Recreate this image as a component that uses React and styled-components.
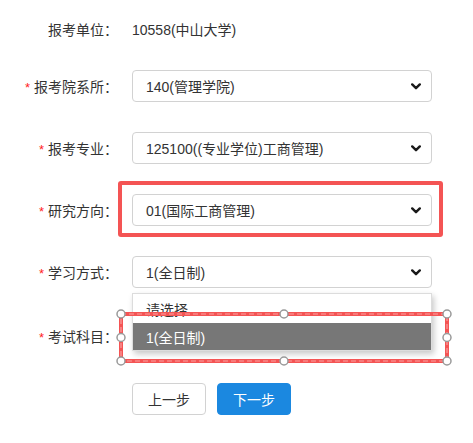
import React from "react";
import styled, { createGlobalStyle } from "styled-components";

const Global = createGlobalStyle`
  html, body { margin: 0; padding: 0; background: #fff; }
  body { font-family: "Liberation Sans", "Noto Sans CJK SC", sans-serif; font-size: 14px; color: #333; }
`;

const Form = styled.div`
  width: 473px; height: 443px; box-sizing: border-box; padding-top: 13px;
  display: flex; flex-direction: column; gap: 30px;
`;

const Row = styled.div`
  display: flex; align-items: center; height: 32px;
  margin-top: ${({ $mt }) => $mt || 0}px;
`;

const Label = styled.div`
  width: 118px; margin-right: 14px; text-align: right; white-space: nowrap;
  color: #333; font-size: 14px;
  .req { color: #f22; margin-right: 4px; font-size: 13px; }
`;

const Value = styled.div`
  color: #333; font-size: 14px;
`;

const Field = styled.div`
  position: relative; width: 300px; height: 32px;
`;

const SelectBox = styled.div`
  box-sizing: border-box; width: 300px; height: 32px; border: 1px solid #d2d2d2; border-radius: 4px;
  display: flex; align-items: center; justify-content: space-between; padding: 0 10px 0 13px;
  color: #333; background: #fff;
  svg { display: block; }
`;

const RedFrame = styled.div`
  position: absolute; top: -13px; left: -14px; right: -11px; bottom: -11px;
  border: 4px solid #f45454; border-radius: 3px; pointer-events: none;
`;

const DropList = styled.div`
  position: absolute; top: 37px; left: 0; width: 300px; z-index: 5;
  background: #fff; border: 1px solid #dcdcdc; box-sizing: border-box;
  box-shadow: 2px 3px 6px rgba(0,0,0,0.22);
`;

const Option = styled.div`
  height: ${({ $h }) => $h}px; display: flex; align-items: center; padding-left: 13px;
  background: ${({ $active }) => ($active ? "#777777" : "#fff")};
  color: ${({ $active }) => ($active ? "#fff" : "#333")};
`;

const SelectionBox = styled.svg`
  position: absolute; left: -11px; top: -6px; z-index: 6; overflow: visible; pointer-events: none;
`;

const Buttons = styled.div`
  display: flex; gap: 11px; padding-left: 132px; margin-top: 1px;
`;

const Button = styled.button`
  width: 74px; height: 32px; border-radius: 4px; font-family: inherit; font-size: 14px;
  border: 1px solid ${({ $primary }) => ($primary ? "#1b88e0" : "#d2d2d2")};
  background: ${({ $primary }) => ($primary ? "#1b88e0" : "#fff")};
  color: ${({ $primary }) => ($primary ? "#fff" : "#333")};
  cursor: pointer; padding: 0;
`;

const Chevron = () => (
  <svg width="10" height="7" viewBox="0 0 10 7">
    <path d="M1.2 1.4 L5 5.2 L8.8 1.4" fill="none" stroke="#1a1a1a" strokeWidth="2.4" strokeLinecap="round" strokeLinejoin="round" />
  </svg>
);

function Select({ value, children }) {
  return (
    <Field>
      <SelectBox>
        <span>{value}</span>
        <Chevron />
      </SelectBox>
      {children}
    </Field>
  );
}

function Handles() {
  const w = 326, h = 47;
  const pts = [
    [0, 0], [w / 2, 0], [w, 0],
    [0, h / 2], [w, h / 2],
    [0, h], [w / 2, h], [w, h],
  ];
  return (
    <SelectionBox width={w} height={h}>
      <rect x="0" y="0" width={w} height={h} fill="none" stroke="#f45454" strokeWidth="4" />
      <rect x="0" y="0" width={w} height={h} fill="none" stroke="#f9a0a0" strokeWidth="1.2" strokeDasharray="5 3" />
      {pts.map(([x, y], i) => (
        <circle key={i} cx={x} cy={y} r="4" fill="#fff" stroke="#999" strokeWidth="1.5" />
      ))}
    </SelectionBox>
  );
}

export default function App() {
  return (
    <>
      <Global />
      <Form>
        <Row style={{ marginBottom: -5 }}>
          <Label>报考单位：</Label>
          <Value>10558(中山大学)</Value>
        </Row>
        <Row>
          <Label><span className="req">*</span>报考院系所：</Label>
          <Select value="140(管理学院)" />
        </Row>
        <Row>
          <Label><span className="req">*</span>报考专业：</Label>
          <Select value="125100((专业学位)工商管理)" />
        </Row>
        <Row>
          <Label><span className="req">*</span>研究方向：</Label>
          <Select value="01(国际工商管理)">
            <RedFrame />
          </Select>
        </Row>
        <Row>
          <Label><span className="req">*</span>学习方式：</Label>
          <Select value="1(全日制)">
            <DropList>
              <Option $h={29}>请选择</Option>
              <Option $h={27} $active>1(全日制)</Option>
            </DropList>
          </Select>
        </Row>
        <Row $mt={2}>
          <Label><span className="req">*</span>考试科目：</Label>
          <Field>
            <Handles />
          </Field>
        </Row>
        <Buttons>
          <Button>上一步</Button>
          <Button $primary>下一步</Button>
        </Buttons>
      </Form>
    </>
  );
}
